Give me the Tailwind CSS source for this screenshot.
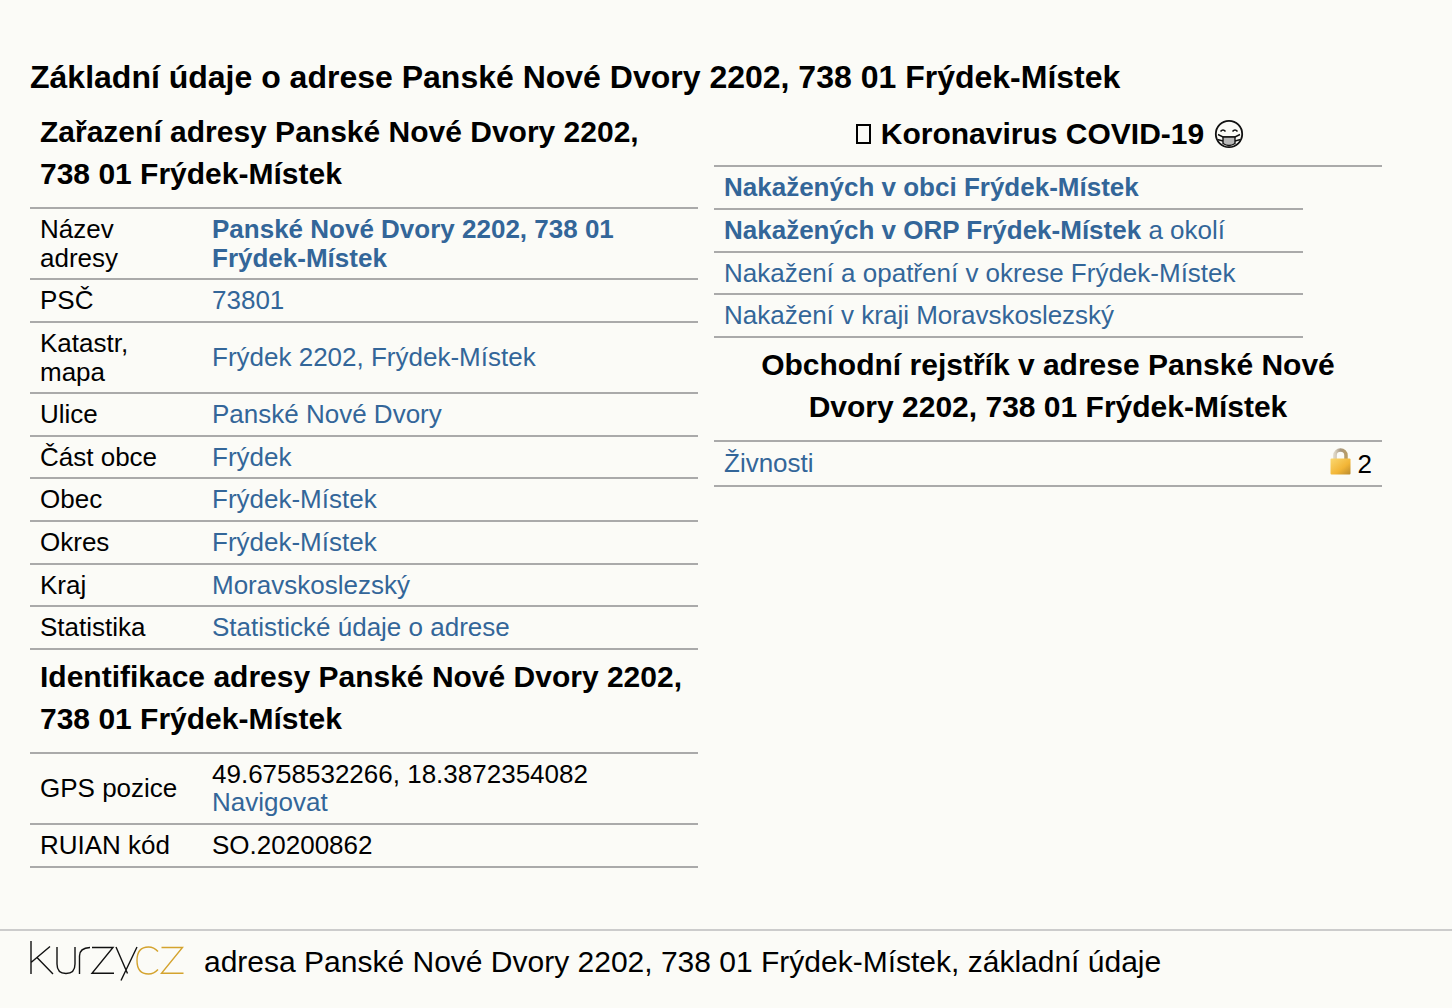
<!DOCTYPE html>
<html lang="cs">
<head>
  <meta charset="utf-8">
  <title>Základní údaje o adrese Panské Nové Dvory 2202</title>
  <script src="https://cdn.jsdelivr.net/npm/@tailwindcss/browser@4"></script>
</head>
<body class="h-[1008px] overflow-hidden bg-[#fbfbf7] text-black font-['Liberation_Sans',Arial,sans-serif] text-[26px] leading-[28.8px]">

  <main class="h-[929px] px-[30px] pt-[56px]">
    <h1 class="font-bold text-[32px] leading-[42px] mb-[12px]">Základní údaje o adrese Panské Nové Dvory 2202, 738 01 Frýdek-Místek</h1>

    <div class="grid grid-cols-[668px_668px] gap-x-[16px]">
      <!-- left column -->
      <section>
        <h2 class="font-bold text-[30px] leading-[42px] px-[10px] pt-[1px] pb-[12px]">Zařazení adresy Panské Nové Dvory 2202, 738 01 Frýdek-Místek</h2>
        <table class="w-full table-fixed border-collapse border-t-2 border-[#aaaaaa]">
          <tbody>
            <tr class="border-b-2 border-[#aaaaaa]"><td class="w-[172px] pl-[10px] pr-[40px] py-[5.9px]">Název adresy</td><td class="px-[10px] py-[5.9px]"><a class="font-bold text-[#336699]">Panské Nové Dvory 2202, 738 01 Frýdek-Místek</a></td></tr>
            <tr class="border-b-2 border-[#aaaaaa]"><td class="pl-[10px] py-[5.9px]">PSČ</td><td class="px-[10px] py-[5.9px]"><a class="text-[#336699]">73801</a></td></tr>
            <tr class="border-b-2 border-[#aaaaaa]"><td class="pl-[10px] pr-[40px] py-[5.9px]">Katastr, mapa</td><td class="px-[10px] py-[5.9px]"><a class="text-[#336699]">Frýdek 2202, Frýdek-Místek</a></td></tr>
            <tr class="border-b-2 border-[#aaaaaa]"><td class="pl-[10px] py-[5.9px]">Ulice</td><td class="px-[10px] py-[5.9px]"><a class="text-[#336699]">Panské Nové Dvory</a></td></tr>
            <tr class="border-b-2 border-[#aaaaaa]"><td class="pl-[10px] py-[5.9px]">Část obce</td><td class="px-[10px] py-[5.9px]"><a class="text-[#336699]">Frýdek</a></td></tr>
            <tr class="border-b-2 border-[#aaaaaa]"><td class="pl-[10px] py-[5.9px]">Obec</td><td class="px-[10px] py-[5.9px]"><a class="text-[#336699]">Frýdek-Místek</a></td></tr>
            <tr class="border-b-2 border-[#aaaaaa]"><td class="pl-[10px] py-[5.9px]">Okres</td><td class="px-[10px] py-[5.9px]"><a class="text-[#336699]">Frýdek-Místek</a></td></tr>
            <tr class="border-b-2 border-[#aaaaaa]"><td class="pl-[10px] py-[5.9px]">Kraj</td><td class="px-[10px] py-[5.9px]"><a class="text-[#336699]">Moravskoslezský</a></td></tr>
            <tr class="border-b-2 border-[#aaaaaa]"><td class="pl-[10px] py-[5.9px]">Statistika</td><td class="px-[10px] py-[5.9px]"><a class="text-[#336699]">Statistické údaje o adrese</a></td></tr>
          </tbody>
        </table>
        <h2 class="font-bold text-[30px] leading-[42px] px-[10px] pt-[6px] pb-[12px]">Identifikace adresy Panské Nové Dvory 2202, 738 01 Frýdek-Místek</h2>
        <table class="w-full table-fixed border-collapse border-t-2 border-[#aaaaaa]">
          <tbody>
            <tr class="border-b-2 border-[#aaaaaa]"><td class="w-[172px] pl-[10px] py-[5.85px]">GPS pozice</td><td class="px-[10px] py-[5.85px]">49.6758532266, 18.3872354082<br><a class="text-[#336699]">Navigovat</a></td></tr>
            <tr class="border-b-2 border-[#aaaaaa]"><td class="pl-[10px] py-[5.85px]">RUIAN kód</td><td class="px-[10px] py-[5.85px]">SO.20200862</td></tr>
          </tbody>
        </table>
      </section>

      <!-- right column -->
      <section>
        <h2 class="flex items-center justify-center gap-[10px] font-bold text-[30px] leading-[42px] pl-[4px] pt-[3px] pb-[10px] border-b-2 border-[#aaaaaa]">
          <span class="w-[15px] h-[20px] border-[2.5px] border-black"></span>
          <span>Koronavirus COVID-19</span>
          <svg width="30" height="30" viewBox="0 0 30 30" fill="none" stroke="#111111" stroke-width="1.8">
            <circle cx="15" cy="15" r="13.2"/>
            <path d="M6.5 12.5q2.5-3 5 0M18.5 12.5q2.5-3 5 0" stroke-width="1.6"/>
            <path d="M4 15.500L9 18H21L26 15.500M3.500 20.500L9 22M26.500 20.500L21 22" stroke-width="1.4"/>
            <path d="M9 18H21V24.500Q15 28.500 9 24.500Z" fill="#b8b8b8" stroke-width="1.4"/>
          </svg>
        </h2>
        <ul class="w-[589px]">
          <li class="px-[10px] py-[6px] border-b-2 border-[#aaaaaa]"><a class="font-bold text-[#336699]">Nakažených v obci Frýdek-Místek</a></li>
          <li class="px-[10px] py-[6px] border-b-2 border-[#aaaaaa] text-[#336699]"><a class="font-bold">Nakažených v ORP Frýdek-Místek</a> a okolí</li>
          <li class="px-[10px] py-[6px] border-b-2 border-[#aaaaaa]"><a class="text-[#336699]">Nakažení a opatření v okrese Frýdek-Místek</a></li>
          <li class="px-[10px] py-[6px] border-b-2 border-[#aaaaaa]"><a class="text-[#336699]">Nakažení v kraji Moravskoslezský</a></li>
        </ul>
        <h2 class="font-bold text-[30px] leading-[42px] text-center px-[40px] pt-[6px] pb-[12px] border-b-2 border-[#aaaaaa]">Obchodní rejstřík v adrese Panské Nové Dvory 2202, 738 01 Frýdek-Místek</h2>
        <div class="flex justify-between items-center px-[10px] pt-[7px] pb-[7px] border-b-2 border-[#aaaaaa]">
          <a class="text-[#336699]">Živnosti</a>
          <span class="flex items-center gap-[7px]">
            <svg width="21" height="27" viewBox="0 0 21 27" class="-mt-[5px]">
              <defs>
                <linearGradient id="lockBody" x1="0" y1="0" x2="1" y2="1"><stop offset="0" stop-color="#fbd870"/><stop offset=".6" stop-color="#f2b536"/><stop offset="1" stop-color="#b98a2e"/></linearGradient>
                <linearGradient id="lockBow" x1="0" y1="0" x2="1" y2="0"><stop offset="0" stop-color="#dcd4c4"/><stop offset=".5" stop-color="#a89880"/><stop offset="1" stop-color="#b89c66"/></linearGradient>
              </defs>
              <path d="M5 12V7.500a5.500 5.500 0 0 1 11 0V12" fill="none" stroke="url(#lockBow)" stroke-width="3.500"/>
              <rect x="0.500" y="10.500" width="20" height="16" rx="1" fill="url(#lockBody)"/>
            </svg>
            <span class="relative top-[1px]">2</span>
          </span>
        </div>
      </section>
    </div>
  </main>

  <footer class="h-[79px] border-t-2 border-[#cccccc] flex items-start pl-[30px] pt-[10px] gap-[20px] text-[30px] leading-[42px]">
    <!-- kurzy.cz wordmark, thin line letters -->
    <svg width="154" height="40" viewBox="0 0 154 40" fill="none" stroke-width="1.4" class="shrink-0">
      <g stroke="#111111">
        <path d="M1 0V33M1 21.500L20 5.500M7 16.500L23 33"/>
        <path d="M27 6V23q0 9.500 9 9.500t9-9.500V6"/>
        <path d="M49.500 33V15q0-8 10.500-8.500"/>
        <path d="M62 6.500H83L62 32.300H84"/>
        <path d="M86 6L97.500 32.500M107 6L91 39.500"/>
      </g>
      <g stroke="#d4a32e">
        <path d="M128 10.500q-4-4.500-9.500-4.500q-11.500 0-11.500 13.500t11.500 13.500q5.500 0 9.500-4.500"/>
        <path d="M131.500 6.500H152.500L131.500 32.300H153.500"/>
      </g>
    </svg>
    <span>adresa Panské Nové Dvory 2202, 738 01 Frýdek-Místek, základní údaje</span>
  </footer>
</body>
</html>
